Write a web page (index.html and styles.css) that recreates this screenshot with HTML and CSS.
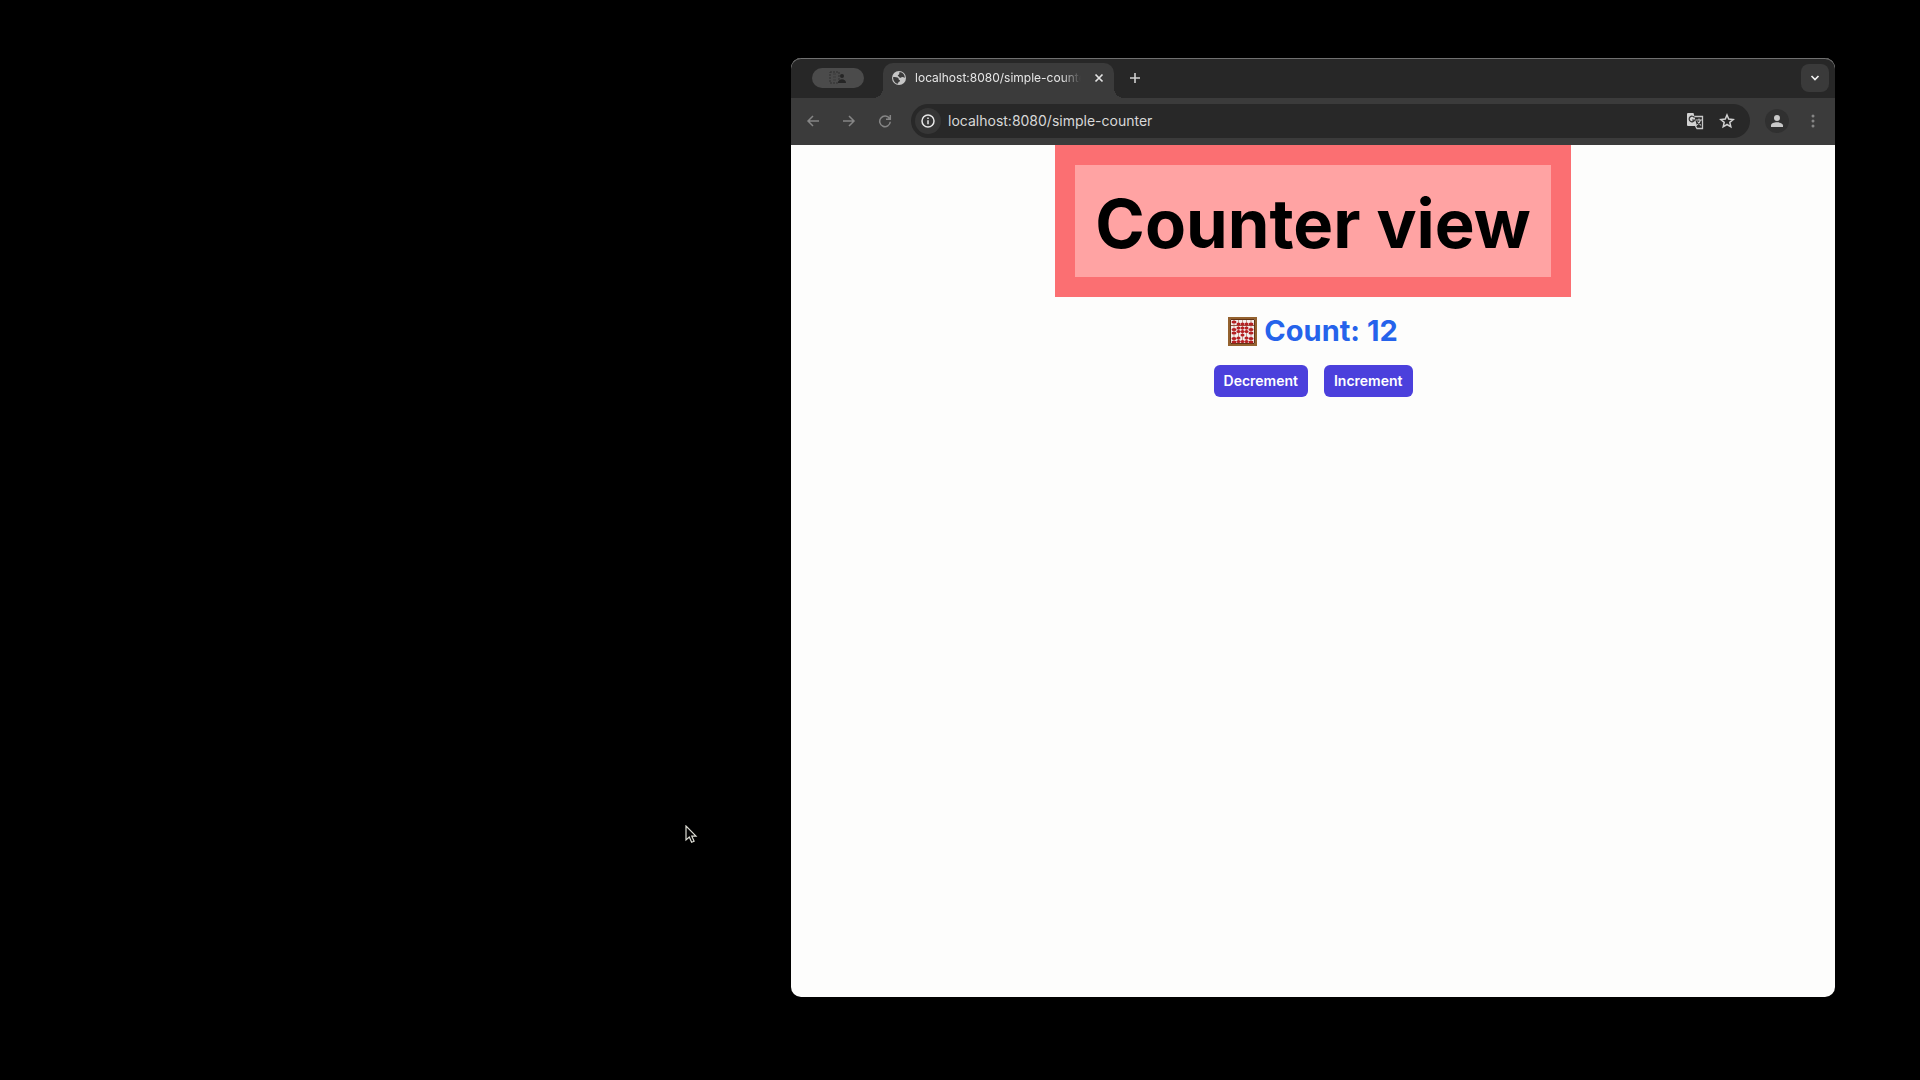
FILE: index.html
```html
<!DOCTYPE html>
<html lang="en">
<head>
<meta charset="utf-8">
<meta name="viewport" content="width=device-width, initial-scale=1">
<title>Counter view</title>
<link rel="stylesheet" href="styles.css">
</head>
<body>
<section class="window" aria-label="Browser window">
  <header class="chrome">
    <div class="tab-strip">
      <span class="window-pill">
        <svg width="20" height="16" viewBox="0 0 20 16" aria-hidden="true"><path d="M2 2h9v11H2z" fill="none" stroke="#303030" stroke-dasharray="2 1"/><path d="M5 4h3M5 7h3M5 10h3" stroke="#3c3c3c"/><circle cx="14" cy="6" r="2" fill="#252525"/><path d="M10 13c0-5 8-5 8 0z" fill="#252525"/></svg>
      </span>
      <div class="tab">
        <svg class="globe" width="16" height="16" viewBox="0 0 16 16" aria-hidden="true"><circle cx="8" cy="8" r="7" fill="#c6c6c6"/><path d="M2.2 7c2 .1 4.300.2 5 .9.8.8.2 1.700 1.300 2.200 1 .5.6 1.500-.5 1.700-.7.1-.5 1.400-1.300 1.900C3.800 13.300 1.700 10 2.200 7z" fill="#3b3b3b"/><path d="M8.600 2.100c2.900.2 5.200 2.700 5.200 5.600-1 .2-1.400-.5-2.300-.6-1.200-.1-1.300 1-2.400.7-1.100-.3-.9-1.300-1.900-1.600-.8-.3-.4-1.300.4-1.400 1.200-.1.400-1.900 1-2.700z" fill="#3b3b3b"/></svg>
        <span class="tab-title">localhost:8080/simple-counter</span>
        <button class="icon-button" type="button" aria-label="Close tab"><svg width="10" height="10" viewBox="0 0 10 10"><path d="M1.500 1.500l7 7M8.500 1.500l-7 7" stroke="#e2e2e2" stroke-width="1.700"/></svg></button>
      </div>
      <button class="icon-button new-tab" type="button" aria-label="New tab"><svg width="12" height="12" viewBox="0 0 12 12"><path d="M6 1v10M1 6h10" stroke="#d0d0d0" stroke-width="1.600"/></svg></button>
      <button class="icon-button tab-search" type="button" aria-label="Search tabs"><svg width="10" height="8" viewBox="0 0 10 8"><path d="M1.500 2L5 5.500 8.500 2" fill="none" stroke="#efefef" stroke-width="1.700"/></svg></button>
    </div>
    <nav class="toolbar" aria-label="Navigation">
      <div class="history">
        <button class="icon-button" type="button" aria-label="Back"><svg width="14" height="14" viewBox="0 0 14 14"><path d="M13 7H2M7 2L2 7l5 5" fill="none" stroke="#858585" stroke-width="1.500"/></svg></button>
        <button class="icon-button" type="button" aria-label="Forward"><svg width="14" height="14" viewBox="0 0 14 14"><path d="M1 7h11M7 2l5 5-5 5" fill="none" stroke="#858585" stroke-width="1.500"/></svg></button>
        <button class="icon-button" type="button" aria-label="Reload"><svg width="14" height="14" viewBox="0 0 14 14"><path d="M11.500 4.500A5.300 5.300 0 1 0 12.300 7.800M12.300 1v4.300H8" fill="none" stroke="#858585" stroke-width="1.500"/></svg></button>
      </div>
      <div class="address">
        <button class="icon-button site-info" type="button" aria-label="Site information"><svg width="16" height="16" viewBox="0 0 16 16"><circle cx="8" cy="8" r="6" fill="none" stroke="#e8e8e8" stroke-width="1.500"/><path d="M8 7.200v4M8 4.600v1.500" stroke="#e8e8e8" stroke-width="1.500"/></svg></button>
        <input class="url" type="text" value="localhost:8080/simple-counter" aria-label="Address">
        <button class="icon-button" type="button" aria-label="Translate page"><svg width="18" height="18" viewBox="0 0 18 18"><path d="M2 1h5.500l3.500 13H2a1 1 0 0 1-1-1V2a1 1 0 0 1 1-1z" fill="#d2d2d2"/><path d="M8.400 5.600A2.800 2.800 0 1 0 8.600 8H6" fill="none" stroke="#333" stroke-width="1.200"/><path d="M8.500 4.500h8v12H11l-1.500-2.500" fill="none" stroke="#c8c8c8" stroke-width="1.300"/><path d="M10 8h6M13 6.500V8M14.500 8c-.6 2.300-1.800 4-3.800 5M11.500 9.500l3.500 4" fill="none" stroke="#c8c8c8" stroke-width="1.100"/></svg></button>
        <button class="icon-button" type="button" aria-label="Bookmark this page"><svg width="16" height="16" viewBox="0 0 16 16"><path d="M8 2l1.700 4.100 4.500.4-3.400 2.900 1 4.400L8 11.500l-3.800 2.300 1-4.400-3.400-2.900 4.500-.4z" fill="none" stroke="#d0d0d0" stroke-width="1.500"/></svg></button>
      </div>
      <button class="icon-button profile" type="button" aria-label="Profile"><svg width="14" height="14" viewBox="0 0 14 14"><circle cx="7" cy="4" r="3" fill="#c9c9c9"/><path d="M1 13v-1.500C1 7.300 13 7.300 13 11.500V13z" fill="#c9c9c9"/></svg></button>
      <button class="icon-button menu" type="button" aria-label="Menu"><svg width="4" height="16" viewBox="0 0 4 16"><g fill="#858585"><circle cx="2" cy="3" r="1.500"/><circle cx="2" cy="8" r="1.500"/><circle cx="2" cy="13" r="1.500"/></g></svg></button>
    </nav>
  </header>
  <main class="page">
    <div class="banner"><h1 class="title">Counter view</h1></div>
    <h2 class="count">
      <svg width="29" height="29" viewBox="0 0 29 29" aria-hidden="true">
        <path d="M1 1h27v27H1z" fill="#f4eeee" stroke="#94622f" stroke-width="2"/><path d="M2.500 2.500h24v24h-24z" fill="none" stroke="#633415"/>
        <path d="M6 3v23M10.500 3v23M14.500 3v23M18.500 3v23M23 3v23" stroke="#c79b8c"/><path d="M3 8.500h23" stroke="#9a5141"/>
        <g fill="#b52024"><ellipse cx="6" cy="5" rx="2.500" ry="1.500"/><ellipse cx="6" cy="12.500" rx="2.500" ry="1.500"/><ellipse cx="6" cy="16" rx="2.500" ry="1.500"/><ellipse cx="6" cy="21.500" rx="2.500" ry="1.500"/><ellipse cx="6" cy="25" rx="2.500" ry="1.500"/><ellipse cx="10.500" cy="7" rx="2" ry="1.500"/><ellipse cx="10.500" cy="11" rx="2" ry="1.500"/><ellipse cx="10.500" cy="14.500" rx="2" ry="1.500"/><ellipse cx="10.500" cy="21" rx="2" ry="1.500"/><ellipse cx="10.500" cy="24.500" rx="2" ry="1.500"/><ellipse cx="14.500" cy="7" rx="2" ry="1.500"/><ellipse cx="14.500" cy="11" rx="2" ry="1.500"/><ellipse cx="14.500" cy="14.500" rx="2" ry="1.500"/><ellipse cx="14.500" cy="18" rx="2" ry="1.500"/><ellipse cx="14.500" cy="24.500" rx="2" ry="1.500"/><ellipse cx="18.500" cy="7" rx="2" ry="1.500"/><ellipse cx="18.500" cy="11" rx="2" ry="1.500"/><ellipse cx="18.500" cy="14.500" rx="2" ry="1.500"/><ellipse cx="18.500" cy="21" rx="2" ry="1.500"/><ellipse cx="18.500" cy="24.500" rx="2" ry="1.500"/><ellipse cx="23" cy="7" rx="2.500" ry="1.500"/><ellipse cx="23" cy="12.500" rx="2.500" ry="1.500"/><ellipse cx="23" cy="16" rx="2.500" ry="1.500"/><ellipse cx="23" cy="21.500" rx="2.500" ry="1.500"/><ellipse cx="23" cy="25" rx="2.500" ry="1.500"/></g>
      </svg>
      <span>Count: 12</span>
    </h2>
    <div class="actions">
      <button class="action" type="button">Decrement</button>
      <button class="action" type="button">Increment</button>
    </div>
  </main>
</section>
<svg class="pointer" width="14" height="20" viewBox="0 0 14 20" aria-hidden="true"><path d="M1 1v14l3.300-3 2.300 5.300 2.500-1-2.300-5.100H11z" fill="#050505" stroke="#dcdcd4" stroke-width="1.200"/></svg>
</body>
</html>
```
FILE: styles.css
```css
* {
  box-sizing: border-box;
}

body {
  display: flex;
  min-height: 100vh;
  margin: 0;
  padding: 58px 85px 83px 41.2vw;
  background: #000;
  font-family: Inter, "Liberation Sans", sans-serif;
}

button,
input {
  margin: 0;
  padding: 0;
  border: 0;
  background: none;
  font: inherit;
}

h1,
h2 {
  margin: 0;
}

svg {
  display: block;
  flex: none;
}

.window {
  display: flex;
  flex: 1;
  flex-direction: column;
  min-width: 0;
  overflow: hidden;
  border-radius: 10px;
  background: #fdfdfc;
}

.chrome {
  background: #3b3b3b;
  border-radius: 10px 10px 0 0;
}

.tab-strip {
  display: flex;
  align-items: center;
  height: 40px;
  padding: 0 6px 0 21px;
  border-radius: 10px 10px 0 0;
  background: #272727;
  box-shadow: inset 0 1px #707070;
}

.icon-button {
  display: flex;
  flex: none;
  align-items: center;
  justify-content: center;
  width: 20px;
  height: 20px;
}

.window-pill {
  display: flex;
  align-items: center;
  justify-content: center;
  width: 52px;
  height: 20px;
  border-radius: 10px;
  background: #4b4b4b;
}

.tab {
  position: relative;
  display: flex;
  align-items: center;
  gap: 8px;
  align-self: flex-end;
  width: 231px;
  height: 35px;
  margin-left: 19px;
  padding: 0 5px 5px 8px;
  border-radius: 10px 10px 0 0;
  background: #3b3b3b;
}

.tab::before,
.tab::after {
  position: absolute;
  bottom: 0;
  width: 10px;
  height: 10px;
  content: "";
}

.tab::before {
  right: 100%;
  background: radial-gradient(circle at 0 0, #272727 10px, #3b3b3b 10px);
}

.tab::after {
  left: 100%;
  background: radial-gradient(circle at 100% 0, #272727 10px, #3b3b3b 10px);
}

.tab-title {
  flex: 1;
  overflow: hidden;
  color: #e6e6e6;
  font-size: 12px;
  line-height: 16px;
  white-space: nowrap;
  mask-image: linear-gradient(to right, #000 88%, transparent);
}

.new-tab {
  margin-left: 11px;
}

.tab-search {
  width: 28px;
  height: 28px;
  margin-left: auto;
  border-radius: 8px;
  background: #3a3a3a;
}

.toolbar {
  display: flex;
  align-items: center;
  height: 47px;
  padding: 0 12px 2px;
}

.history {
  display: flex;
  gap: 16px;
  margin-right: 16px;
}

.address {
  display: flex;
  flex: 1;
  align-items: center;
  gap: 12px;
  height: 34px;
  padding: 0 13px 0 4px;
  border-radius: 17px;
  background: #282828;
}

.site-info {
  width: 26px;
  height: 26px;
  border-radius: 13px;
  background: #363636;
}

.url {
  flex: 1;
  min-width: 0;
  margin-left: -5px;
  color: #d8d8d8;
  font-size: 14px;
  line-height: 20px;
}

.profile {
  width: 24px;
  height: 24px;
  margin-left: 15px;
  border-radius: 12px;
  background: #303030;
}

.menu {
  margin-left: 14px;
}

.page {
  display: flex;
  flex: 1;
  flex-direction: column;
  align-items: center;
}

.banner {
  padding: 20px;
  background: #fb6f72;
}

.title {
  padding: 23px 20px 17px;
  background: #ffa3a3;
  color: #000;
  font-size: 67px;
  font-weight: 700;
  line-height: 72px;
}

.count {
  display: flex;
  align-items: center;
  gap: 7px;
  margin-top: 16px;
  color: #2563eb;
  font-size: 29px;
  font-weight: 700;
  line-height: 36px;
}

.actions {
  display: flex;
  gap: 16px;
  margin-top: 16px;
}

.action {
  padding: 6px 10px;
  border-radius: 6px;
  background: #4b40dc;
  color: #fff;
  font-size: 14px;
  font-weight: 600;
  line-height: 20px;
}

.pointer {
  position: absolute;
  top: 825px;
  left: 685px;
}
```
